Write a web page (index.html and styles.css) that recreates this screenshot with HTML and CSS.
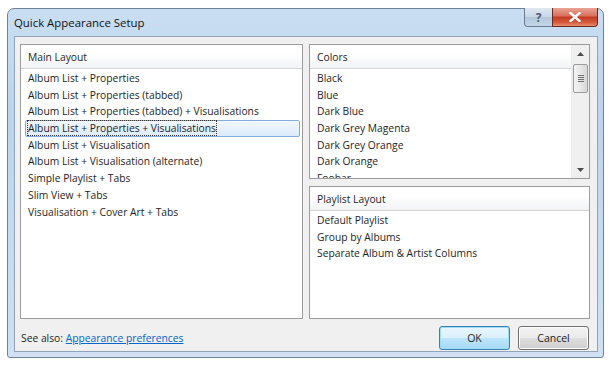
FILE: index.html
```html
<!DOCTYPE html>
<html lang="en">
<head>
    <meta charset="UTF-8">
    <title>Quick Appearance Setup</title>
    <link rel="stylesheet" href="styles.css">
</head>
<body>
    <div class="window">
        <div class="titlebar">
            <span class="title">Quick Appearance Setup</span>
            <div class="caption-buttons">
                <div class="cap-btn help">?</div>
                <div class="cap-btn close">
                    <svg width="12" height="10" viewBox="0 0 12 10">
                        <path d="M1.5 1 L10.5 9 M10.5 1 L1.5 9" stroke="#fff" stroke-width="2.4" stroke-linecap="square"/>
                    </svg>
                </div>
            </div>
        </div>

        <div class="client">
            <div class="panes">
                <div class="listbox">
                    <div class="list-head">Main Layout</div>
                    <div class="list-items">
                        <div class="item">Album List + Properties</div>
                        <div class="item">Album List + Properties (tabbed)</div>
                        <div class="item">Album List + Properties (tabbed) + Visualisations</div>
                        <div class="item selected"><span>Album List + Properties + Visualisations</span></div>
                        <div class="item">Album List + Visualisation</div>
                        <div class="item">Album List + Visualisation (alternate)</div>
                        <div class="item">Simple Playlist + Tabs</div>
                        <div class="item">Slim View + Tabs</div>
                        <div class="item">Visualisation + Cover Art + Tabs</div>
                    </div>
                </div>

                <div class="right-col">
                    <div class="listbox colors">
                        <div class="list-main">
                            <div class="list-head">Colors</div>
                            <div class="list-items">
                                <div class="item">Black</div>
                                <div class="item">Blue</div>
                                <div class="item">Dark Blue</div>
                                <div class="item">Dark Grey Magenta</div>
                                <div class="item">Dark Grey Orange</div>
                                <div class="item">Dark Orange</div>
                                <div class="item">Foobar</div>
                            </div>
                        </div>
                        <div class="scrollbar">
                            <div class="arrow">
                                <svg width="7" height="4" viewBox="0 0 7 4"><path d="M0 4 L3.5 0 L7 4 Z" fill="#4d4d4d"/></svg>
                            </div>
                            <div class="track">
                                <div class="thumb">
                                    <span></span><span></span><span></span><span></span>
                                </div>
                            </div>
                            <div class="arrow">
                                <svg width="7" height="4" viewBox="0 0 7 4"><path d="M0 0 L7 0 L3.5 4 Z" fill="#4d4d4d"/></svg>
                            </div>
                        </div>
                    </div>

                    <div class="listbox playlist">
                        <div class="list-head">Playlist Layout</div>
                        <div class="list-items">
                            <div class="item">Default Playlist</div>
                            <div class="item">Group by Albums</div>
                            <div class="item">Separate Album &amp; Artist Columns</div>
                        </div>
                    </div>
                </div>
            </div>

            <div class="footer">
                <div class="see-also">See also: <a href="#">Appearance preferences</a></div>
                <div class="buttons">
                    <button class="btn default">OK</button>
                    <button class="btn">Cancel</button>
                </div>
            </div>
        </div>
    </div>
</body>
</html>
```

FILE: styles.css
```css
body {
    margin: 0;
    background: #fff;
    font-family: "Open Sans", "Noto Sans", sans-serif;
    font-size: 10.3px;
    color: #1e1e1e;
}

/* window frame */
.window {
    margin: 8px 0 0 7px;
    width: 597px;
    height: 350px;
    border: 1px solid #6f8299;
    border-radius: 7px 7px 3px 3px;
    background: linear-gradient(180deg, #c9def2 0%, #bcd4ec 30%, #cfe1f3 100%);
    box-sizing: border-box;
    padding: 0 5px 5px 6px;
    display: flex;
    flex-direction: column;
}

.titlebar {
    height: 27px;
    display: flex;
    align-items: flex-start;
    justify-content: space-between;
}

.title {
    font-size: 11.4px;
    margin-top: 6px;
    color: #111;
}

.caption-buttons {
    display: flex;
    margin-top: -1px;
}

.cap-btn {
    height: 19px;
    display: flex;
    align-items: center;
    justify-content: center;
    border: 1px solid #6a7c92;
    border-top: none;
    box-sizing: border-box;
}

.help {
    width: 28px;
    border-radius: 0 0 0 4px;
    border-right: none;
    background: linear-gradient(180deg, #dfe8f1 0%, #c8d6e5 50%, #b3c6da 51%, #c4d6e8 100%);
    color: #4c5c70;
    font-size: 12px;
    font-weight: bold;
}

.close {
    width: 46px;
    border-radius: 0 0 4px 0;
    border-color: #6e2a22;
    background: linear-gradient(180deg, #e8a493 0%, #d86f5c 45%, #c13a22 50%, #d45b3e 80%, #e88f6c 100%);
}

/* dialog body */
.client {
    flex: 1;
    background: #f0f0f0;
    border: 1px solid #8fa3ba;
    padding: 7px 7px 0 5px;
    display: flex;
    flex-direction: column;
}

.panes {
    display: grid;
    grid-template-columns: 283px 281px;
    gap: 6px;
    height: 275px;
}

.right-col {
    display: flex;
    flex-direction: column;
    gap: 7px;
}

.listbox {
    background: #fff;
    border: 1px solid #9c9c9c;
    display: flex;
    flex-direction: column;
    overflow: hidden;
}

.colors {
    height: 135px;
    box-sizing: border-box;
    flex-direction: row;
}

.playlist {
    flex: 1;
}

.list-main {
    flex: 1;
    display: flex;
    flex-direction: column;
    overflow: hidden;
}

.list-head {
    height: 23px;
    line-height: 24px;
    padding-left: 7px;
    border-bottom: 1px solid #d5d5d5;
    background: linear-gradient(180deg, #ffffff 0%, #ffffff 40%, #f2f3f5 100%);
    flex-shrink: 0;
}

.list-items {
    padding: 1px 3px 0 5px;
}

.item {
    height: 16.7px;
    line-height: 17.5px;
    padding-left: 2px;
    white-space: nowrap;
}

.item.selected {
    background: linear-gradient(180deg, #f1f7fe 0%, #dcebfc 100%);
    border: 1px solid #84acdd;
    border-radius: 2px;
    margin-left: -1px;
    margin-right: -1px;
    height: 14.7px;
    line-height: 15.5px;
}

.item.selected span {
    outline: 1px dotted #333;
    outline-offset: 0;
}

/* scrollbar */
.scrollbar {
    width: 17px;
    background: #f0f0f0;
    border-left: 1px solid #ececec;
    display: flex;
    flex-direction: column;
}

.arrow {
    height: 17px;
    display: flex;
    align-items: center;
    justify-content: center;
    flex-shrink: 0;
}

.track {
    flex: 1;
    padding-top: 2px;
}

.thumb {
    height: 27px;
    margin: 0 1px;
    border: 1px solid #9b9b9b;
    border-radius: 2px;
    background: linear-gradient(90deg, #f3f3f3 0%, #e8e8e8 50%, #d8d8d8 100%);
    display: flex;
    flex-direction: column;
    align-items: center;
    justify-content: center;
    gap: 1px;
}

.thumb span {
    width: 6px;
    height: 1px;
    background: #6e6e6e;
}

/* footer */
.footer {
    flex: 1;
    display: flex;
    align-items: center;
    justify-content: space-between;
    padding: 5px 1px 0 0;
}

.see-also {
    padding-left: 1px;
}

.see-also a {
    color: #0066cc;
}

.buttons {
    display: flex;
    gap: 8px;
}

.btn {
    width: 71px;
    height: 24px;
    font-family: inherit;
    font-size: 10.5px;
    color: #1e1e1e;
    border: 1px solid #707070;
    border-radius: 3px;
    background: linear-gradient(180deg, #f2f2f2 0%, #ebebeb 49%, #dddddd 50%, #cfcfcf 100%);
    box-shadow: inset 0 0 0 1px #fcfcfc;
}

.btn.default {
    border-color: #3c7fb1;
    background: linear-gradient(180deg, #eaf6fd 0%, #d9f0fc 49%, #bee6fd 50%, #a7d9f5 100%);
    box-shadow: inset 0 0 0 1px #98e0f7;
}
```
